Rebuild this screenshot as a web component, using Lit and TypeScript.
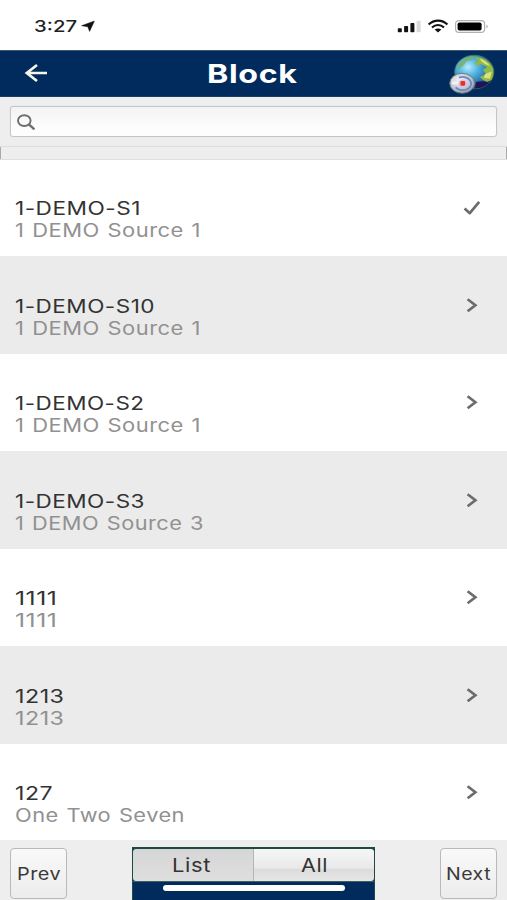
import { LitElement, html, css, svg } from "lit";
import { customElement, property } from "lit/decorators.js";

interface Block {
  name: string;
  nameWidth: number;
  source: string;
  sourceWidth: number;
  selected?: boolean;
}

const BLOCKS: Block[] = [
  { name: "1-DEMO-S1", nameWidth: 126, source: "1 DEMO Source 1", sourceWidth: 186, selected: true },
  { name: "1-DEMO-S10", nameWidth: 140, source: "1 DEMO Source 1", sourceWidth: 186 },
  { name: "1-DEMO-S2", nameWidth: 129.5, source: "1 DEMO Source 1", sourceWidth: 186 },
  { name: "1-DEMO-S3", nameWidth: 130, source: "1 DEMO Source 3", sourceWidth: 189 },
  { name: "1111", nameWidth: 42.5, source: "1111", sourceWidth: 42.5 },
  { name: "1213", nameWidth: 49.5, source: "1213", sourceWidth: 49.5 },
  { name: "127", nameWidth: 38, source: "One Two Seven", sourceWidth: 170 },
];

/** A single line of text set in a wide face: glyphs are stretched to `width`. */
@customElement("wide-text")
class WideText extends LitElement {
  @property() text = "";
  @property({ type: Number }) width = 100;

  static styles = css`
    :host { display: block; height: 22px; line-height: 0; }
    svg { display: block; height: 22px; overflow: visible; }
    text { fill: currentColor; }
  `;

  render() {
    return html`<svg width=${this.width} height="22">
      ${svg`<text x="0" y="18" textLength=${this.width} lengthAdjust="spacingAndGlyphs">${this.text}</text>`}
    </svg>`;
  }
}

@customElement("block-row")
class BlockRow extends LitElement {
  @property({ attribute: false }) block!: Block;

  static styles = css`
    :host {
      display: flex;
      box-sizing: border-box;
      height: 97.5px;
      padding: 38.3px 25px 0 14.6px;
      justify-content: space-between;
      font: 400 18.4px Inter, sans-serif;
      letter-spacing: 0.4px;
    }
    .name { color: #333; }
    .source { color: #919191; margin-top: 0.3px; font-size: 18.6px; word-spacing: 1px; }
    .mark { display: block; width: 20px; height: 20px; margin-top: 0; }
    .mark path { fill: none; stroke: #6c6c6c; stroke-width: 2.7; }
  `;

  render() {
    const b = this.block;
    return html`
      <div>
        <wide-text class="name" .text=${b.name} .width=${b.nameWidth}></wide-text>
        <wide-text class="source" .text=${b.source} .width=${b.sourceWidth}></wide-text>
      </div>
      <svg class="mark" viewBox="0 0 20 20">
        ${b.selected
          ? svg`<path d="M2.6 11.4 L7.8 16.2 L17.2 4.8" stroke-linejoin="round"/>`
          : svg`<path d="M5.6 4.2 L13.4 10.2 L5.6 16.2"/>`}
      </svg>
    `;
  }
}

@customElement("app-root")
class AppRoot extends LitElement {
  static styles = css`
    :host {
      display: flex;
      flex-direction: column;
      width: 507px;
      height: 900px;
      overflow: hidden;
      background: #fff;
      font-family: Inter, sans-serif;
      color: #333;
    }
    svg { display: block; }
    .status {
      box-sizing: border-box;
      flex: none;
      height: 50px;
      padding: 14px 18px 0 34px;
      display: flex;
      justify-content: space-between;
    }
    .clock { display: flex; }
    .time { color: #222; font: 500 16.5px Inter, sans-serif; }
    .bar {
      flex: none;
      box-sizing: border-box;
      height: 47px;
      background: #002b5c;
      border-top: 1px solid #3b5a6a;
      border-bottom: 1px solid #1d3f5f;
      display: grid;
      grid-template-columns: 1fr auto 1fr;
      padding: 0 10px 0 24px;
    }
    .back { margin-top: 12px; }
    .title { color: #fff; font: 700 25.8px Inter, sans-serif; margin: 14.2px 16px 0 0; letter-spacing: 0.5px; }
    .globe { justify-self: end; margin-top: 2px; }
    .search {
      flex: none;
      box-sizing: border-box;
      height: 49px;
      padding: 9px 10px 9px;
      background: #eeeeee;
    }
    .field {
      box-sizing: border-box;
      height: 31px;
      border: 1px solid #c4c6ca;
      border-radius: 3px;
      background: linear-gradient(#f3f3f3, #fdfdfd 70%);
      box-shadow: 0 0 1px #c8c8c8;
      padding: 7px 0 0 5px;
    }
    .strip {
      flex: none;
      box-sizing: border-box;
      height: 14px;
      background: #eeeeee;
      border: solid #dedede;
      border-width: 1px 0;
      box-shadow: inset 1px 0 #a9a9a9, inset -1px 0 #a9a9a9;
    }
    .list { flex: none; height: 680px; overflow: hidden; }
    .rows { margin-top: -1.2px; }
    block-row:nth-child(even) { background: #ebebeb; }
    .footer {
      flex: 1;
      background: #eeeeee;
      display: flex;
      justify-content: space-between;
      padding: 0 9.6px 0 10.4px;
      align-items: flex-start;
    }
    .button {
      box-sizing: border-box;
      width: 57px;
      height: 51px;
      margin-top: 8px;
      border: 1.5px solid #b9b9b9;
      border-radius: 4px;
      background: linear-gradient(#f9f9f9, #ececec);
      display: flex;
      justify-content: center;
      padding-top: 13px;
      font-size: 17px;
      letter-spacing: 0.4px;
      color: #3a3a3a;
    }
    .switch {
      box-sizing: border-box;
      width: 243px;
      height: 60px;
      margin: 7px 0 0 0;
      background: #002b5c;
      border: solid #1e4a46;
      border-width: 2px 1px 0 1px;
    }
    .tabs { display: flex; height: 32px; border-bottom: 1px solid #3f6060; }
    .tab {
      flex: 1;
      display: flex;
      justify-content: center;
      padding-top: 5px;
      font-size: 18.5px;
      letter-spacing: 0.5px;
      color: #333;
      background: linear-gradient(#f6f6f6, #e9e9e9 60%, #dcdcdc 64%, #e6e6e6);
      border-radius: 0 3px 3px 0;
    }
    .tab.on {
      background: linear-gradient(#d6d6d6, #dedede);
      border-right: 1px solid #b5b5b5;
      border-radius: 3px 0 0 3px;
    }
    .on wide-text { margin-right: 4px; }
    .home { width: 182px; height: 6px; margin: 3px 0 0 30px; border-radius: 3px; background: #fff; }
  `;

  private statusBar() {
    return html`
      <div class="status">
        <div class="clock">
          <wide-text class="time" text="3:27" width="43"></wide-text>
          <svg width="18" height="22"><path d="M4.6 11.7 L17.4 7 L12.6 17.4 L10.8 12.8 Z" fill="#111" stroke="#111" stroke-width="0.5"/></svg>
        </div>
        <svg width="92" height="24" viewBox="0 0 92 24">
          <g fill="#111">
            <rect x="0.8" y="14.2" width="4" height="4" rx="0.8"/>
            <rect x="7.1" y="12" width="4" height="6.2" rx="0.8"/>
            <rect x="13.4" y="9" width="4" height="9.2" rx="0.8"/>
          </g>
          <rect x="19.6" y="6.8" width="4" height="11.4" rx="0.8" fill="#d9d9d9"/>
          <g fill="none" stroke="#111" stroke-width="2.1">
            <path d="M31.6 10.6 C37 5.3 45.2 5.3 50.4 10.6"/>
            <path d="M35 13.6 C38.6 10.2 43.5 10.2 47 13.6"/>
          </g>
          <path d="M37.6 15.6 Q41 13.6 44.4 15.6 L41 18.6 Z" fill="#111"/>
          <rect x="58.6" y="6.7" width="29" height="11.6" rx="3.4" fill="none" stroke="#b0b0b0" stroke-width="1.2"/>
          <rect x="60.6" y="8.5" width="24" height="8" rx="1.8" fill="#000"/>
          <path d="M89.4 10.4 Q92.2 12.4 89.4 14.4 Z" fill="#b0b0b0"/>
        </svg>
      </div>
    `;
  }

  private globe() {
    return html`<svg class="globe" width="50" height="42" viewBox="0 0 50 42">
      <defs>
        <radialGradient id="sea" cx="0.34" cy="0.35" r="0.75">
          <stop offset="0" stop-color="#b5ecff"/><stop offset="0.35" stop-color="#52b4e2"/>
          <stop offset="0.75" stop-color="#22659c"/><stop offset="1" stop-color="#151554"/>
        </radialGradient>
        <radialGradient id="dish" cx="0.4" cy="0.35" r="0.7">
          <stop offset="0" stop-color="#f5f5fa"/><stop offset="0.7" stop-color="#b9bfd4"/>
          <stop offset="1" stop-color="#8b91a8"/>
        </radialGradient>
      </defs>
      <ellipse cx="27.3" cy="19" rx="19.6" ry="16.8" fill="url(#sea)" stroke="#467b50" stroke-width="0.8"/>
      <path d="M12 11 Q18 3 28 3.2 L25 7 L20 8 L17 12 L11 17 Z" fill="#7eae55" opacity="0.8"/>
      <path d="M28 4 Q40 4 45.5 14 Q48 20 44.4 27 L40 29 L36 27 L33 24 L39 21 L36 17 L40 14 L34 11 L30 13 L27 10 L31 8 Z" fill="#8dba48"/>
      <path d="M33 5.4 Q40 8 42.8 13 L38 11 L34 8 Z M38 21 L44.8 18.6 L43 25.6 L37 25 Z" fill="#e2e079"/>
      <path d="M29 29 Q38 27 42 30 Q37 35.4 28 35.4 Z" fill="#201458"/>
      <ellipse cx="15.2" cy="30.3" rx="12.4" ry="10" fill="url(#dish)" stroke="#64836d" stroke-width="1"/>
      <path d="M8.6 34.4 A8.6 6.6 0 1 0 12 24.6" fill="none" stroke="#6b86c4" stroke-width="1.7"/>
      <path d="M4.6 28.6 H15 V31.6 H5.4 Z" fill="#f2f2f6"/>
      <ellipse cx="15.8" cy="30.4" rx="4.6" ry="4" fill="#dfc5d3"/>
      <rect x="13.4" y="28" width="4.8" height="4.8" rx="1.4" fill="#dc3433"/>
    </svg>`;
  }

  render() {
    return html`
      ${this.statusBar()}
      <div class="bar">
        <svg class="back" width="26" height="22" viewBox="0 0 26 22">
          <path d="M23 10 H3 M13 2 L2.8 10 L13 18" fill="none" stroke="#f4f6ea" stroke-width="2.7"/>
        </svg>
        <wide-text class="title" text="Block" width="90.5"></wide-text>
        ${this.globe()}
      </div>
      <div class="search">
        <div class="field">
          <svg width="20" height="17" viewBox="0 0 20 17">
            <g fill="none" stroke="#6e6e6e" stroke-width="1.9">
              <ellipse cx="8.3" cy="6.6" rx="6.3" ry="5.4"/>
              <path d="M12.6 10.2 L18.4 15.4" stroke-width="2.4"/>
            </g>
          </svg>
        </div>
      </div>
      <div class="strip"></div>
      <div class="list">
        <div class="rows">${BLOCKS.map((b) => html`<block-row .block=${b}></block-row>`)}</div>
      </div>
      <div class="footer">
        <div class="button"><wide-text text="Prev" width="44"></wide-text></div>
        <div class="switch">
          <div class="tabs">
            <div class="tab on"><wide-text text="List" width="39"></wide-text></div>
            <div class="tab"><wide-text text="All" width="27"></wide-text></div>
          </div>
          <div class="home"></div>
        </div>
        <div class="button"><wide-text text="Next" width="45"></wide-text></div>
      </div>
    `;
  }
}
